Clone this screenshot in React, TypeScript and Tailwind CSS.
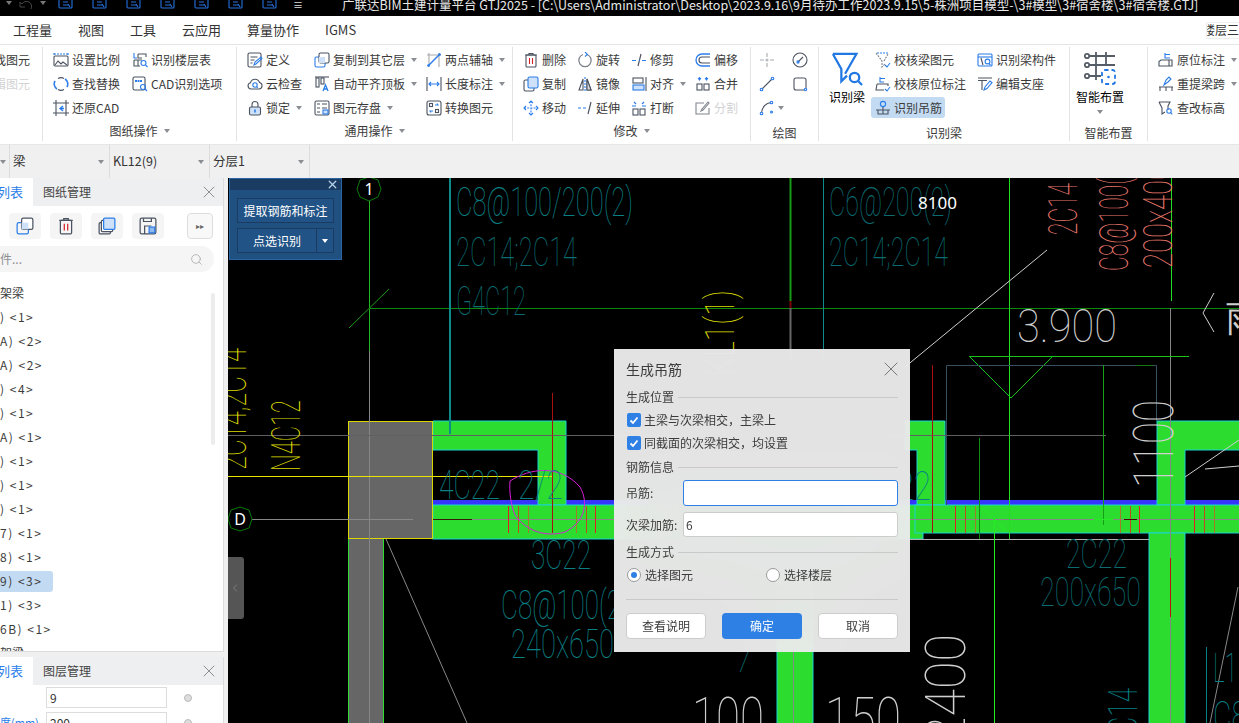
import type { ReactNode } from "react";
import { ChevronLeft, Search, X } from "lucide-react";

const DK = "#4b5361";
const BL = "#2b7de9";

function Ic({ children, size = 16 }: { children: ReactNode; size?: number }) {
  return (
    <svg viewBox="0 0 16 16" width={size} height={size} fill="none" stroke={DK} strokeWidth="1.1" className="shrink-0">
      {children}
    </svg>
  );
}

const icons: Record<string, ReactNode> = {
  scale: (<><path d="M1 3v-2M15 3v-2M1 2h14" stroke={BL} strokeDasharray="2 1" /><rect x="1" y="4" width="14" height="10" rx="1" /><path d="M2 13l3-4 3 3 2-2 4 3" /></>),
  floors: (<><path d="M2 1v5h3" stroke={BL} /><path d="M6 2h8v3M6 2v4h4M2 8h8M2 8v6h6M6 8v6" /><circle cx="11.5" cy="11" r="2.5" stroke={BL} /><path d="M13.5 13l2 2" stroke={BL} /></>),
  replace: (<><path d="M12 3a6 6 0 0 1 2 8M4 13a6 6 0 0 1-2-8" stroke={BL} strokeWidth="1.6" /><path d="M5 2.5a6 6 0 0 1 6 0M11 13.5a6 6 0 0 1-6 0" /></>),
  cadOpt: (<><rect x="1" y="1" width="12" height="13" rx="1.5" /><path d="M3 5h7" stroke={BL} strokeWidth="2" strokeDasharray="2 .5" /><circle cx="11" cy="11" r="2.5" stroke={BL} /><path d="M13 13l2 2" stroke={BL} /></>),
  restore: (<><path d="M3 0v16M0 3h16M13 0v16M0 13h16" /><path d="M10 6L7 8.5 10 11M7 8.5h4" stroke={BL} strokeWidth="1.4" /></>),
  define: (<><rect x="1" y="1" width="13" height="14" rx="1.5" /><path d="M3.5 5h7M3.5 8h4M3.5 11h2" /><path d="M7 13l1-3 6-5 1 1.5-6 5.5z" stroke={BL} /></>),
  cloud: (<><path d="M4 13a3.2 3.2 0 0 1-.5-6.3 4.7 4.7 0 0 1 9-.2A3.3 3.3 0 0 1 12 13z" /><circle cx="8" cy="9" r="2.2" stroke={BL} /><path d="M9.6 10.6l1.2 1.2" stroke={BL} /></>),
  lock: (<><path d="M5 7V4.5a3 3 0 0 1 6 0V7" /><rect x="2.5" y="7" width="11" height="8" rx="1.5" fill="#cfe1f8" stroke={DK} /><path d="M8 9.5v3" stroke={BL} strokeWidth="1.6" /></>),
  copyLayer: (<><rect x="1" y="5" width="10" height="10" rx="1.5" stroke={BL} /><rect x="5" y="1" width="10" height="10" rx="1.5" fill="#fff" /><path d="M5 5v6h6V5z" fill="#cfe1f8" stroke="none" /></>),
  align: (<><path d="M1 1h14" /><rect x="2" y="2" width="3" height="9" /><rect x="7" y="2" width="3" height="6" /><path d="M9 15l2.5-6 2.5 6M10 13h3" stroke={BL} strokeWidth="1.3" /></>),
  saveEl: (<><rect x="1" y="1" width="14" height="14" rx="1.5" /><path d="M3 4h3M3 8h3M3 12h3M8 4h5M8 8h5" /><rect x="9" y="10" width="5" height="4" fill="#cfe1f8" stroke={BL} /></>),
  axis: (<><path d="M3 1v14M13 1v14M1 3h14" stroke="#a6a9ae" /><path d="M2 14L14 2" stroke={BL} strokeWidth="1.4" /><circle cx="2.5" cy="13.5" r="1.3" fill={BL} stroke="none" /><circle cx="13.5" cy="2.5" r="1.3" fill={BL} stroke="none" /></>),
  dim: (<><path d="M1 1v14M15 1v14" /><path d="M3 8h10M5 6L3 8l2 2M11 6l2 2-2 2" stroke={BL} /></>),
  convert: (<><rect x="1" y="1" width="14" height="14" rx="2" /><rect x="3.5" y="3.5" width="3" height="3" /><rect x="9.5" y="9.5" width="3" height="3" /><path d="M9 5h3l-1-1.5M7 11H4l1 1.5" stroke={BL} /></>),
  del: (<><path d="M2 3h12M6 3V1.5h4V3" /><rect x="3" y="3" width="10" height="12" rx="1" /><path d="M6.5 6v6M9.5 6v6" stroke="#d8232a" /></>),
  rotate: (<><path d="M6 2.5A6.2 6.2 0 1 0 10 2.5" stroke="#7d838d" strokeWidth="1.3" /><path d="M8 0l2.5 2.5L8 4.5" stroke={BL} /></>),
  trim: (<><path d="M1 8.5h4M11 8.5h4" stroke={BL} /><path d="M7 14L10 2" /><path d="M8 8.5h2" stroke={BL} strokeDasharray="1 1" /></>),
  offset: (<><path d="M15 2H7a6 6 0 0 0 0 12h8" stroke={BL} strokeWidth="1.3" /><path d="M15 5H7a3 3 0 0 0 0 6h8" /></>),
  copy: (<><rect x="1" y="4" width="10" height="11" rx="1.5" /><rect x="5" y="1" width="10" height="11" rx="1.5" fill="#cfe1f8" stroke={BL} /></>),
  mirror: (<><path d="M8 1v14" stroke={BL} strokeDasharray="2 1" /><path d="M6 3L2 14h4zM10 3l4 11h-4z" /><path d="M10 3l4 11h-4z" fill="#d9dbde" /></>),
  alignV: (<><path d="M15 1v14" /><rect x="2" y="2" width="10" height="5" /><rect x="2" y="9" width="11" height="5" fill="#cfe1f8" stroke={BL} /></>),
  merge: (<><path d="M3 2l1.5 2L6 2M10 2l1.5 2L13 2M4.5 1v3M11.5 1v3" stroke={BL} /><rect x="2" y="8" width="5" height="6" /><rect x="9" y="8" width="5" height="6" /></>),
  move: (<><path d="M8 1v14M1 8h14" stroke={BL} strokeDasharray="2 1.2" /><path d="M6 3l2-2 2 2M6 13l2 2 2-2M3 6L1 8l2 2M13 6l2 2-2 2" stroke={BL} /></>),
  extend: (<><path d="M1 8h3M6 8h3" stroke={BL} /><path d="M11 14l3-12" /></>),
  split: (<><path d="M3 2l2 2M13 2l-2 2M1 6h4M11 6h4" stroke={BL} /><rect x="2" y="9" width="5" height="6" /><rect x="9" y="9" width="5" height="6" /></>),
  divide: (<><path d="M9 3H1v11h13V8" /><path d="M6 11l2-1 6-7-1-1-6 7z" /></>),
  point: (<><path d="M8 1v4M8 11v4M1 8h4M11 8h4" stroke="#a9acb1" /><circle cx="8" cy="8" r="1.6" fill="#b9bcc1" stroke="none" /></>),
  circle: (<><circle cx="8" cy="8" r="7" /><path d="M5.5 10.5L11 5" /><circle cx="6" cy="10" r="1.1" stroke={BL} /></>),
  line: (<><path d="M3 13L13 3" /><circle cx="2.5" cy="13.5" r="1.3" stroke={BL} /><circle cx="13.5" cy="2.5" r="1.3" stroke={BL} /></>),
  rect: (<><rect x="2" y="2" width="12" height="12" rx="2" /><circle cx="13.5" cy="13.5" r="1.2" stroke={BL} fill="#fff" /></>),
  arc: (<><path d="M2.5 13C3 7 7 3 12 2.5" /><circle cx="2.5" cy="13.5" r="1.3" stroke={BL} fill="#fff" /><circle cx="12.5" cy="2.5" r="1.3" stroke={BL} fill="#fff" /><circle cx="12.5" cy="12" r="1" stroke={BL} /></>),
  checkBeam: (<><path d="M2 1h11" stroke={BL} strokeDasharray="2 1" /><path d="M1 1l6 8v6l3-3M9 9l4-7" stroke="#7d838d" strokeDasharray="2 1" /><path d="M10 13l2 2 3-4" stroke={BL} /></>),
  beamPart: (<><rect x="1" y="2" width="14" height="12" rx="1" stroke={BL} /><path d="M1 5h14" stroke={BL} /><path d="M4 6l2 7" /><circle cx="10.5" cy="9.5" r="2.4" stroke={BL} /><path d="M12 11.5l1.5 1.5" stroke={BL} /></>),
  checkMark: (<><path d="M5 1v5h4M5 2.5h5" stroke={BL} /><path d="M2 8h11v2M2 8l-1 6h8" /><path d="M10 13l2 2 3-4" stroke={BL} /></>),
  support: (<><path d="M1 2h14M1 4.5h9M5 4.5V14" /><path d="M7 14l1-3 5-6 2 1.5-5 6z" stroke={BL} /></>),
  hanger: (<><circle cx="8" cy="4" r="2.6" stroke={BL} /><path d="M1 10h14M3 10v4h10v-4M8 7v7" /></>),
  inplace: (<><path d="M7 1v5h5M7 2.5h5" stroke={BL} /><path d="M3 8h11v6H1V9.5zM11 8v6" /></>),
  reraise: (<><path d="M6 9l2-5 3-3 2 2-3 3z" stroke={BL} /><path d="M1 11h14M2 15v-4M8 15v-4M14 15v-4" /></>),
  height: (<><path d="M1 2h11l-2 4v4M1 2l3 6v6l3-2" /><circle cx="11" cy="11" r="2.2" stroke={BL} /><path d="M12.7 12.7l1.6 1.6" stroke={BL} /></>),
};

type ItemProps = { i?: string; t: string; caret?: boolean; off?: boolean };

function Caret({ className = "border-t-[#8a8d92]" }: { className?: string }) {
  return <span className={`inline-block h-0 w-0 border-x-[3.5px] border-t-[4px] border-x-transparent ${className}`} />;
}

function Item({ i, t, caret, off }: ItemProps) {
  return (
    <div className={`flex h-6 items-center gap-[3px] whitespace-nowrap ${off ? "text-[#bfc1c4] opacity-70" : "text-[#3a3a3a]"}`}>
      {i && <Ic>{icons[i]}</Ic>}
      <span>{t}</span>
      {caret && <span className="ml-[3px] flex"><Caret /></span>}
    </div>
  );
}

function Col({ w, items }: { w: string; items: ItemProps[] }) {
  return (
    <div className={`flex shrink-0 flex-col ${w}`}>
      {items.map((it) => (
        <Item key={it.t} {...it} />
      ))}
    </div>
  );
}

function Group({ w, pl, label, caret, low, children }: { w: string; pl: string; label?: string; caret?: boolean; low?: boolean; children: ReactNode }) {
  return (
    <div className={`flex h-[94px] shrink-0 flex-col border-r border-[#e3e3e3] ${w}`}>
      <div className={`flex h-[73px] pt-[1px] ${pl}`}>{children}</div>
      <div className={`flex h-[21px] items-center justify-center gap-[6px] text-[12px] text-[#3a3a3a] ${low ? "pt-[4px]" : ""}`}>
        {label}
        {caret && <Caret />}
      </div>
    </div>
  );
}

function FunnelIcon() {
  return (
    <svg viewBox="0 0 34 36" width="32" height="34" fill="none" stroke="#2178e3" strokeWidth="2.4">
      <path d="M2 2h25L15 23M2 2l9 16v13l6-6" />
      <circle cx="25" cy="27" r="5" />
      <path d="M29 31l4 4" />
    </svg>
  );
}

function SmartIcon() {
  return (
    <svg viewBox="0 0 32 34" width="32" height="34" fill="none" stroke="#565c66" strokeWidth="1.8">
      <circle cx="3" cy="4" r="2.2" />
      <circle cx="3" cy="13" r="2.2" />
      <circle cx="3" cy="24" r="2.2" />
      <path d="M5 4h26M5 13h26M5 24h12M12 0v28M22 0v14" />
      <rect x="18" y="18" width="13" height="14" rx="2.5" stroke="#2178e3" strokeDasharray="4 3" />
      <circle cx="24.5" cy="25" r="1.3" fill="#2178e3" stroke="none" />
    </svg>
  );
}

function TitleBar() {
  const quick = [58, 92, 126, 160, 195, 229, 262];
  return (
    <div className="flex h-4 shrink-0 overflow-hidden bg-black">
      <div className="flex h-4 w-[342px] shrink-0">
        <div className="flex w-[58px] items-start gap-[7px] pl-[6px] pt-[1px]">
          <Caret className="border-t-[#777]" />
          <svg viewBox="0 0 14 10" width="14" height="10" fill="none" stroke="#444"><path d="M12 8A5 5 0 0 0 3 3L1 1v5h5" /></svg>
          <Caret className="border-t-[#777]" />
        </div>
        <div className="-mt-[7px] flex gap-[18px]">
          {quick.map((x) => (
            <svg key={x} viewBox="0 0 16 16" width="16" height="16" fill="none" stroke="#2672de" strokeWidth="1.1" className="shrink-0">
              <rect x="1" y="1" width="13" height="14" rx="1" />
              <path d="M5 9h5M5 12h6M10 11l2 3" />
            </svg>
          ))}
        </div>
        <span className="ml-[15px] text-[10px] leading-[10px] text-[#ddd]">≡</span>
      </div>
      <div className="-mt-[5px] whitespace-nowrap text-[12.5px] leading-[20px] text-[#e8e8e8]">
        广联达BIM土建计量平台 GTJ2025 - [C:\Users\Administrator\Desktop\2023.9.16\9月待办工作2023.9.15\5-株洲项目模型-\3#模型\3#宿舍楼\3#宿舍楼.GTJ]
      </div>
    </div>
  );
}

function MenuBar() {
  return (
    <div className="flex h-7 shrink-0 items-center justify-between bg-white text-[13px] text-[#333]">
      <div className="flex gap-[26px] pl-[13px]">
        {["工程量", "视图", "工具", "云应用", "算量协作", "IGMS"].map((t) => (
          <span key={t}>{t}</span>
        ))}
      </div>
      <div className="flex h-[17px] w-[33px] items-center justify-end overflow-hidden whitespace-nowrap rounded-l-[2px] border border-r-0 border-[#eee] text-[12px]">
        楼层三
      </div>
    </div>
  );
}

function Ribbon() {
  return (
    <div className="flex h-[101px] shrink-0 border-y border-[#e6e6e6] bg-white pt-[2px] text-[12px]">
      <Group w="w-[43px]" pl="pl-0">
        <div className="flex w-[30px] flex-col items-end overflow-hidden">
          <Item t="查找图元" />
          <Item t="编辑图元" off />
        </div>
      </Group>
      <Group w="w-[194px]" pl="pl-[10px]" label="图纸操作" caret>
        <Col w="w-[79px]" items={[{ i: "scale", t: "设置比例" }, { i: "replace", t: "查找替换" }, { i: "restore", t: "还原CAD" }]} />
        <Col w="w-[100px]" items={[{ i: "floors", t: "识别楼层表" }, { i: "cadOpt", t: "CAD识别选项" }]} />
      </Group>
      <Group w="w-[276px]" pl="pl-[10px]" label="通用操作" caret>
        <Col w="w-[67px]" items={[{ i: "define", t: "定义" }, { i: "cloud", t: "云检查" }, { i: "lock", t: "锁定", caret: true }]} />
        <Col w="w-[112px]" items={[{ i: "copyLayer", t: "复制到其它层", caret: true }, { i: "align", t: "自动平齐顶板", caret: true }, { i: "saveEl", t: "图元存盘", caret: true }]} />
        <Col w="w-[80px]" items={[{ i: "axis", t: "两点辅轴", caret: true }, { i: "dim", t: "长度标注", caret: true }, { i: "convert", t: "转换图元" }]} />
      </Group>
      <Group w="w-[238px]" pl="pl-[10px]" label="修改" caret>
        <Col w="w-[54px]" items={[{ i: "del", t: "删除" }, { i: "copy", t: "复制" }, { i: "move", t: "移动" }]} />
        <Col w="w-[54px]" items={[{ i: "rotate", t: "旋转" }, { i: "mirror", t: "镜像" }, { i: "extend", t: "延伸" }]} />
        <Col w="w-[64px]" items={[{ i: "trim", t: "修剪" }, { i: "alignV", t: "对齐", caret: true }, { i: "split", t: "打断" }]} />
        <Col w="w-[50px]" items={[{ i: "offset", t: "偏移" }, { i: "merge", t: "合并" }, { i: "divide", t: "分割", off: true }]} />
      </Group>
      <Group w="w-[68px]" pl="pl-[8px]" label="绘图" low>
        <div className="flex w-[33px] flex-col">
          <div className="flex h-6 items-center"><Ic>{icons.point}</Ic></div>
          <div className="flex h-6 items-center"><Ic>{icons.line}</Ic></div>
          <div className="flex h-6 items-center gap-[3px]"><Ic>{icons.arc}</Ic><Caret /></div>
        </div>
        <div className="flex flex-col">
          <div className="flex h-6 items-center"><Ic>{icons.circle}</Ic></div>
          <div className="flex h-6 items-center"><Ic>{icons.rect}</Ic></div>
        </div>
      </Group>
      <Group w="w-[251px]" pl="pl-[10px]" label="识别梁" low>
        <div className="flex w-[46px] shrink-0 flex-col">
          <div className="flex h-[38px] items-end pl-[2px]"><FunnelIcon /></div>
          <div className="mt-[2px] leading-[18px]">识别梁</div>
        </div>
        <div className="flex w-[102px] shrink-0 flex-col">
          <Item i="checkBeam" t="校核梁图元" />
          <Item i="checkMark" t="校核原位标注" />
          <div className="mt-[1px] -ml-[4px] flex h-[21px] w-[74px] items-center gap-[3px] rounded-[3px] bg-[#c3daf3] pl-[4px] text-[#3a3a3a]">
            <Ic>{icons.hanger}</Ic>
            识别吊筋
          </div>
        </div>
        <Col w="w-[80px]" items={[{ i: "beamPart", t: "识别梁构件" }, { i: "support", t: "编辑支座" }]} />
      </Group>
      <Group w="w-[78px]" pl="pl-[6px]" label="智能布置" low>
        <div className="flex w-[48px] flex-col items-center">
          <div className="flex h-[38px] items-end"><SmartIcon /></div>
          <div className="mt-[2px] leading-[18px] whitespace-nowrap">智能布置</div>
          <div className="mt-[4px] flex"><Caret /></div>
        </div>
      </Group>
      <div className="flex h-[73px] flex-1 pl-[10px] pt-[1px]">
        <Col w="w-[84px]" items={[{ i: "inplace", t: "原位标注", caret: true }, { i: "reraise", t: "重提梁跨", caret: true }, { i: "height", t: "查改标高" }]} />
      </div>
    </div>
  );
}

function SelectorBar() {
  const cell = (t: string, w: string) => (
    <div className={`flex h-full items-center justify-between border-r border-[#dcdcdc] pl-[3px] pr-[5px] ${w}`}>
      <span>{t}</span>
      <Caret />
    </div>
  );
  return (
    <div className="flex h-[33px] shrink-0 items-center bg-[#f0f0f0] text-[12.5px] text-[#333]">
      <div className="flex h-full w-[10px] items-center justify-end border-r border-[#dcdcdc] pr-[3px]"><Caret /></div>
      {cell("梁", "w-[100px]")}
      {cell("KL12(9)", "w-[100px]")}
      {cell("分层1", "w-[100px]")}
    </div>
  );
}

function TabHead({ t }: { t: string }) {
  return (
    <div className="flex h-7 shrink-0 items-center bg-[#eeeff1] text-[13px] text-[#444]">
      <div className="flex h-full w-[33px] items-center justify-end bg-white pr-[10px] text-[#2b7de9]">
        <span className="whitespace-nowrap">列表</span>
      </div>
      <span className="ml-[10px] flex-1 whitespace-nowrap text-[12px]">{t}</span>
      <X size={20} strokeWidth={1.2} className="mr-[4px] text-[#8d8f93]" />
    </div>
  );
}

function ToolBtn({ children }: { children: ReactNode }) {
  return <div className="flex h-[26px] w-8 items-center justify-center rounded-[4px] bg-[#f5f5f5]">{children}</div>;
}

const rows: [string, boolean?][] = [
  [") <1>"], ["A) <2>"], ["A) <2>"], [") <4>"], [") <1>"], ["A) <1>"], [") <1>"], [") <1>"], [") <1>"],
  ["7) <1>"], ["8) <1>"], ["9) <3>", true], ["1) <3>"], ["6B) <1>"],
];

function LeftPanel() {
  return (
    <div className="flex w-[224px] shrink-0 flex-col bg-[#f0f0f0]">
      <div className="flex h-[474px] flex-col overflow-hidden border-r border-b border-[#dcdcdc] bg-white">
        <TabHead t="图纸管理" />
        <div className="relative flex flex-col">
          <div className="flex items-center gap-[9px] pl-[9px] pt-[7px]">
            <ToolBtn><Ic size={18}>{icons.copyLayer}</Ic></ToolBtn>
            <ToolBtn><Ic size={18}>{icons.del}</Ic></ToolBtn>
            <ToolBtn><Ic size={18}><rect x="1" y="5" width="10" height="10" rx="1" /><rect x="3" y="3" width="10" height="10" rx="1" fill="#fff" /><rect x="5" y="1" width="10" height="10" rx="1" fill="#cfe1f8" stroke={BL} /></Ic></ToolBtn>
            <ToolBtn><Ic size={18}><rect x="1" y="1" width="14" height="14" rx="1.5" /><path d="M5 15V8h6M4 1v3h7V1" /><rect x="9" y="9" width="5" height="5" fill={BL} fillOpacity=".5" stroke={BL} /></Ic></ToolBtn>
            <div className="ml-[14px] flex h-[26px] w-[26px] items-center justify-center gap-0 rounded-[4px] border border-[#ddd] bg-[#f8f8f8] text-[8px] leading-none text-[#666]">
              ▸▸
            </div>
          </div>
          <div className="mt-[7px] flex h-[26px] w-[214px] items-center justify-between rounded-r-full bg-[#f5f5f5] pr-[11px] text-[12px] text-[#8d8f93]">
            <span>件...</span>
            <Search size={13} strokeWidth={1.4} className="text-[#a4a6a9]" />
          </div>
          <div className="mt-[9px] flex h-[370px] flex-col overflow-hidden text-[12px] text-[#3c3c3c]">
            <div className="flex h-6 shrink-0 items-center whitespace-pre">架梁</div>
            {rows.map(([t, sel], i) => (
              <div key={i} className="flex h-6 shrink-0 items-center">
                <span className={`flex h-[21px] items-center whitespace-pre tracking-[1.5px] ${sel ? "w-[53px] rounded-r-[3px] bg-[#c3daf3]" : ""}`}>{t}</span>
              </div>
            ))}
            <div className="flex h-6 shrink-0 items-center whitespace-pre">架梁</div>
          </div>
          <div className="absolute right-[8px] top-[87px] h-[152px] w-[4px] rounded-full bg-[#ececec]" />
        </div>
      </div>
      <div className="mt-[5px] flex flex-1 flex-col overflow-hidden border-r border-[#dcdcdc] bg-white">
        <TabHead t="图层管理" />
        <div className="flex flex-col gap-[4px] pt-[2px] text-[12px] text-[#333]">
          <div className="flex items-center">
            <div className="ml-[46px] flex h-[21px] w-[121px] items-center border border-[#ddd] pl-[3px]">9</div>
            <span className="ml-[17px] h-2 w-2 rounded-full border border-[#bbb] bg-[#ddd]" />
          </div>
          <div className="flex items-center">
            <span className="w-[46px] overflow-hidden whitespace-nowrap text-[11px] text-[#2b7de9]">度(mm)</span>
            <div className="flex h-[21px] w-[121px] items-center border border-[#ddd] pl-[3px]">200</div>
            <span className="ml-[17px] h-2 w-2 rounded-full border border-[#bbb] bg-[#ddd]" />
          </div>
        </div>
      </div>
    </div>
  );
}

const CAD_FONT = "Roboto, Inter, sans-serif";

function Cad({ x, y, w, fs = 41, c, up, children }: { x: number; y: number; w: number; fs?: number; c: string; up?: boolean; children: string }) {
  return (
    <text
      x={x}
      y={y}
      textLength={w}
      lengthAdjust="spacingAndGlyphs"
      fontFamily={CAD_FONT}
      fontWeight={100}
      fontSize={fs}
      fill={c}
      transform={up ? `rotate(-90 ${x} ${y})` : undefined}
    >
      {children}
    </text>
  );
}

function CadDrawing() {
  const teal = "#0a8085";
  const tealDk = "#0a6c70";
  const salmon = "#e8776c";
  const yellow = "#d9d900";
  const white = "#cfcfcf";
  const g = "#2cdd2f";
  const cy = "#1ad3d3";
  return (
    <svg viewBox="228 178 1011 545" width="1011" height="545" className="block" fill="none">
      <rect x="228" y="178" width="1011" height="545" fill="#000" />

      {/* beams */}
      <rect x="433" y="500" width="806" height="5" fill="#3535ff" />
      <path d="M433 421H566V505H538V450H433Z" fill={g} stroke={cy} />
      <path d="M905 421H945V505H917V450H905Z" fill={g} stroke={cy} />
      <path d="M1240 421H1157V505H1185V450H1240Z" fill={g} stroke={cy} />
      <rect x="433" y="505" width="490" height="34" fill={g} stroke={cy} />
      <rect x="915" y="505" width="330" height="28" fill={g} stroke={cy} />
      <rect x="1149" y="533" width="36" height="195" fill={g} stroke={cy} />
      <rect x="777" y="590" width="36" height="140" fill={g} stroke={cy} />
      <path d="M905 539.5H1149" stroke="#b0b0b0" />

      {/* columns */}
      <rect x="348.5" y="533.5" width="35" height="195" fill="#666" stroke="#2cdd2f" />
      <rect x="348.5" y="421.5" width="84" height="117" fill="#666" stroke="#d8d800" />

      {/* axis lines */}
      <path d="M369.5 200V351" stroke="#22b822" />
      <path d="M369.5 351V723" stroke="#858585" />
      <path d="M349 328L389 289" stroke="#1a9a1a" />
      <path d="M369 308.5H1239" stroke="#0c8a0c" />
      <path d="M228 435.5H1106" stroke="#606060" />
      <path d="M228 476.5H552" stroke="#e6e600" />
      <path d="M252 519.5H413M433 519.5H1239" stroke="#888" />
      <path d="M433 519.5H472" stroke="#3a1a08" />
      <path d="M450 178V434" stroke="#0e8a8a" strokeWidth="2" />
      <path d="M823.5 178V360" stroke="#0e8a8a" />
      <path d="M790.5 178V301" stroke="#189a18" strokeWidth="2" />
      <path d="M790.5 301V308" stroke="#700" strokeWidth="2" />
      <path d="M790.5 308V360" stroke="#666" strokeWidth="2" />
      <path d="M1009.5 178V539" stroke="#22dd22" />
      <path d="M1171.5 178V301" stroke="#22dd22" />
      <path d="M1170.5 308V723" stroke="#858585" />
      <path d="M793.5 600V723" stroke="#888" />
      <path d="M1047 250L905 367" stroke={white} />
      <path d="M386 539L467 723" stroke="#888" />
      <path d="M1185 477L1239 440M1205 469L1239 466" stroke={white} />
      <path d="M1238 587L1210 723" stroke="#888" />
      <path d="M1206.5 647V723" stroke={teal} />

      {/* elevation mark */}
      <path d="M969 356.5H1189M969 356L1011 398L1053 356" stroke="#17c417" />
      <path d="M946.5 505V365.5H1156.5V421" stroke="#36505f" />
      <path d="M1136 365.5H1153" stroke="#117a11" />
      <path d="M1103.5 365V525" stroke="#17a017" />
      <path d="M979.5 438V539" stroke="#118a11" />
      <path d="M994.5 519V723" stroke="#22ee22" />
      <path d="M982 508L1005 530M1094 519.5H1113" stroke="#22ee22" />

      {/* rebars */}
      <path d="M552.5 393V533M932.5 365V533" stroke="#a81010" />
      <path d="M508.5 506V533M595.5 506V533M955.5 506V533M1139.5 506V533M1194.5 506V533" stroke="#e02020" />
      <path d="M518.5 506V533M586.5 506V533M965.5 506V533M1130.5 506V533M1204.5 506V533" stroke="#c04a20" />
      <path d="M528.5 506V533M576.5 506V533M975.5 506V533M1120.5 506V533M1214.5 506V533" stroke="#a8782a" />
      <path d="M1170.5 558V617" stroke="#c01010" />
      <path d="M1124 519.5H1137" stroke="#400" />

      <path d="M510 481C530 468 560 464 580 487C590 505 583 523 565 532C545 538 525 530 515 515C511 505 509 492 510 481Z" stroke="#d820d8" />

      {/* drawing notes */}
      <Cad x={456} y={216} w={177} c={teal}>C8@100/200(2)</Cad>
      <Cad x={456} y={266} w={121} c={tealDk}>2C14;2C14</Cad>
      <Cad x={456} y={315} w={70} c={tealDk}>G4C12</Cad>
      <Cad x={829} y={216} w={123} c={tealDk}>C6@200(2)</Cad>
      <Cad x={829} y={266} w={119} c={tealDk}>2C14;2C14</Cad>
      <Cad x={439} y={499} w={61} c={teal}>4C22</Cad>
      <Cad x={518} y={499} w={45} c={teal}>2/2</Cad>
      <Cad x={531} y={569} w={60} c={teal}>3C22</Cad>
      <Cad x={501} y={619} w={128} c={teal}>C8@100(2)</Cad>
      <Cad x={511} y={658} w={103} c={teal}>240x650</Cad>
      <Cad x={897} y={500} w={34} c={teal}>22</Cad>
      <Cad x={1066} y={568} w={61} c={tealDk}>2C22</Cad>
      <Cad x={1040} y={606} w={101} c={tealDk}>200x650</Cad>
      <Cad x={1137} y={748} w={60} c={teal} up>2C14</Cad>
      <Cad x={1213} y={682} w={24} c={teal}>L1</Cad>
      <Cad x={1213} y={730} w={34} c={teal}>C8</Cad>
      <Cad x={1077} y={235} w={52} c={salmon} up>2C14</Cad>
      <Cad x={1128} y={271} w={93} c={salmon} up>C8@100(</Cad>
      <Cad x={1172} y={268} w={103} c={salmon} up>200x400</Cad>
      <Cad x={246} y={470} w={122} c={yellow} up>2C14;2C14</Cad>
      <Cad x={300} y={471} w={71} c={yellow} up>N4C12</Cad>
      <Cad x={734} y={376} w={86} c={yellow} up>KL1(1)</Cad>
      <Cad x={1017} y={342} w={100} fs={47} c={white}>3.900</Cad>
      <Cad x={1173} y={488} w={88} fs={55} c={white} up>1100</Cad>
      <Cad x={965} y={744} w={110} fs={55} c={white} up>2400</Cad>
      <Cad x={692} y={738} w={72} fs={58} c={white}>100</Cad>
      <Cad x={825} y={738} w={76} fs={58} c={white}>150</Cad>
      <Cad x={736} y={672} w={14} fs={30} c={teal}>7</Cad>
      <path d="M1214 293L1203 313L1214 332" stroke={white} />
      <Cad x={1226} y={331} w={34} fs={36} c={white}>雨</Cad>

      {/* axis bubbles */}
      <path d="M369 177L378 180L381 189L378 197L369 201L360 197L357 189L360 180Z" stroke="#0a7a0a" fill="#000" />
      <path d="M240 507L249 510L252 519L249 528L240 531L231 528L228 519L231 510Z" stroke="#0a7a0a" fill="#000" />
      <text x="369" y="195" textAnchor="middle" fontFamily="'Noto Sans', sans-serif" fontSize="16" fill="#fff">1</text>
      <text x="240" y="525" textAnchor="middle" fontFamily="'Noto Sans', sans-serif" fontSize="16" fill="#fff">D</text>
      <text x="918" y="209" fontFamily="'Noto Sans', sans-serif" fontSize="17" fill="#fff">8100</text>
    </svg>
  );
}

function Section({ t }: { t: string }) {
  return (
    <div className="flex h-4 items-center gap-1 text-[12px] text-[#3c3c3c]">
      <span className="shrink-0">{t}</span>
      <div className="h-px flex-1 bg-[#c9c9c9]" />
    </div>
  );
}

function Check({ t }: { t: string }) {
  return (
    <div className="flex h-[14px] items-center gap-[3px] pl-[1px] text-[12px] text-[#3c3c3c]">
      <span className="flex h-[14px] w-[14px] shrink-0 items-center justify-center rounded-[2px] bg-[#2f80e4]">
        <svg viewBox="0 0 12 12" width="12" height="12" fill="none" stroke="#fff" strokeWidth="1.8"><path d="M2.5 6.5L5 9l4.5-5.5" /></svg>
      </span>
      {t}
    </div>
  );
}

function Radio({ t, on, w }: { t: string; on?: boolean; w?: string }) {
  return (
    <div className={`flex items-center gap-1 text-[12px] text-[#3c3c3c] ${w ?? ""}`}>
      <span className="flex h-[14px] w-[14px] items-center justify-center rounded-full border border-[#9a9a9a] bg-white">
        {on && <span className="h-[6px] w-[6px] rounded-full bg-[#2f80e4]" />}
      </span>
      {t}
    </div>
  );
}

function Dialog() {
  return (
    <div className="absolute left-[386px] top-[171px] flex h-[303px] w-[296px] flex-col bg-[#efefef]/95 px-3 backdrop-blur-2xl">
      <div className="flex h-[40px] items-center justify-between text-[14px] text-[#3c3c3c]">
        生成吊筋
        <X size={24} strokeWidth={1} className="-mr-[5px] text-[#777]" />
      </div>
      <Section t="生成位置" />
      <div className="mt-[8px] flex flex-col gap-[9px]">
        <Check t="主梁与次梁相交，主梁上" />
        <Check t="同截面的次梁相交，均设置" />
      </div>
      <div className="mt-[9px]"><Section t="钢筋信息" /></div>
      <div className="mt-[5px] flex items-center text-[12px] text-[#3c3c3c]">
        <span className="w-[57px]">吊筋:</span>
        <div className="h-[26px] flex-1 rounded-[3px] border border-[#2f80e4] bg-white" />
      </div>
      <div className="mt-[6px] flex items-center text-[12px] text-[#3c3c3c]">
        <span className="w-[57px] whitespace-nowrap">次梁加筋:</span>
        <div className="flex h-[25px] flex-1 items-center rounded-[3px] border border-[#ccc] bg-white pl-[2px]">6</div>
      </div>
      <div className="mt-[7px]"><Section t="生成方式" /></div>
      <div className="mt-[6px] flex pl-[1px]">
        <Radio t="选择图元" on w="w-[139px]" />
        <Radio t="选择楼层" />
      </div>
      <div className="mt-[15px] h-px bg-[#c9c9c9]" />
      <div className="mt-[13px] flex justify-between text-[12px]">
        <div className="flex h-[26px] w-20 items-center justify-center rounded-[4px] border border-[#ccc] bg-white text-[#3c3c3c]">查看说明</div>
        <div className="flex h-[26px] w-20 items-center justify-center rounded-[4px] bg-[#2f80e4] text-white">确定</div>
        <div className="flex h-[26px] w-20 items-center justify-center rounded-[4px] border border-[#ccc] bg-white text-[#3c3c3c]">取消</div>
      </div>
    </div>
  );
}

function FloatPanel() {
  return (
    <div className="absolute left-[1px] top-0 flex h-[82px] w-[113px] flex-col border border-[#2b64a4] bg-[#1f5080] text-[12px] text-white">
      <div className="flex h-[11px] items-center justify-end bg-[#1a3c62] pr-[2px] text-[#b9d2ec]">
        <X size={13} strokeWidth={2.4} />
      </div>
      <div className="flex flex-col gap-[5px] px-[7px] pt-2">
        <div className="flex h-[25px] items-center justify-center border border-[#1a3c62] bg-[#215386]">提取钢筋和标注</div>
        <div className="flex h-[25px] border border-[#1a3c62] bg-[#215386]">
          <div className="flex flex-1 items-center justify-center border-r border-[#1a3c62]">点选识别</div>
          <div className="flex w-[16px] items-center justify-center"><Caret className="border-t-white" /></div>
        </div>
      </div>
    </div>
  );
}

function CollapseTab() {
  return (
    <div className="absolute left-0 top-[379px] flex h-[62px] w-4 items-center justify-start rounded-r-[3px] bg-[#555] pl-[1px]">
      <ChevronLeft size={12} strokeWidth={1.2} className="text-[#999]" />
    </div>
  );
}

export default function App() {
  return (
    <div className="flex h-[723px] w-[1239px] flex-col overflow-hidden bg-[#f0f0f0] font-['Noto_Sans_CJK_SC','Noto_Sans',sans-serif]">
      <TitleBar />
      <MenuBar />
      <Ribbon />
      <SelectorBar />
      <div className="flex min-h-0 flex-1">
        <LeftPanel />
        <div className="w-1 shrink-0 bg-[#f0f0f0]" />
        <div className="relative min-w-0 flex-1 overflow-hidden bg-black">
          <CadDrawing />
          <FloatPanel />
          <CollapseTab />
          <Dialog />
        </div>
      </div>
    </div>
  );
}
